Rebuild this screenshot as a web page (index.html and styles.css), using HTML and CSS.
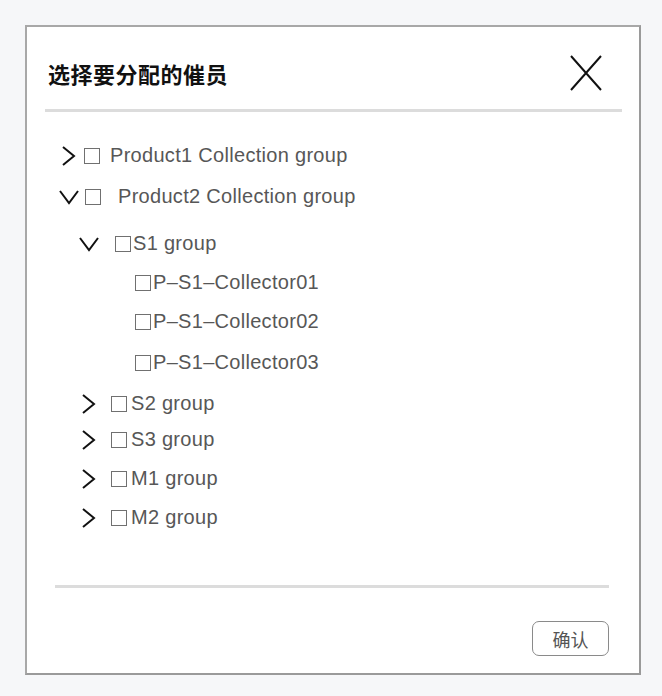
FILE: index.html
```html
<!DOCTYPE html>
<html lang="zh-CN">
<head>
<meta charset="UTF-8" />
<title>选择要分配的催员</title>
<link rel="stylesheet" href="styles.css">
</head>
<body>
  <div class="dialog">
    <div class="dialog-header">
      <h1>选择要分配的催员</h1>
      <button class="close" aria-label="close">
        <svg width="32" height="36" viewBox="0 0 32 36"><path d="M1 1 L31 35 M31 1 L1 35" stroke="#111" stroke-width="2" fill="none"/></svg>
      </button>
    </div>
    <div class="divider top"></div>

    <ul class="tree">
      <li>
        <div class="row">
          <svg class="chev" viewBox="0 0 20 20"><path d="M4 1 L15 10 L4 19"/></svg>
          <span class="box"></span><span class="label">Product1 Collection group</span>
        </div>
      </li>
      <li>
        <div class="row open root-open">
          <svg class="chev" viewBox="0 0 20 20"><path d="M1 4 L10 16 L19 4"/></svg>
          <span class="box"></span><span class="label">Product2 Collection group</span>
        </div>
        <ul class="sub">
          <li>
            <div class="row open s1">
              <svg class="chev" viewBox="0 0 20 20"><path d="M1 4 L10 16 L19 4"/></svg>
              <span class="box"></span><span class="label">S1 group</span>
            </div>
            <ul class="leaves">
              <li class="row leaf"><span class="box"></span><span class="label">P–S1–Collector01</span></li>
              <li class="row leaf"><span class="box"></span><span class="label">P–S1–Collector02</span></li>
              <li class="row leaf"><span class="box"></span><span class="label">P–S1–Collector03</span></li>
            </ul>
          </li>
          <li>
            <div class="row s2">
              <svg class="chev" viewBox="0 0 20 20"><path d="M4 1 L15 10 L4 19"/></svg>
              <span class="box"></span><span class="label">S2 group</span>
            </div>
          </li>
          <li>
            <div class="row s3">
              <svg class="chev" viewBox="0 0 20 20"><path d="M4 1 L15 10 L4 19"/></svg>
              <span class="box"></span><span class="label">S3 group</span>
            </div>
          </li>
          <li>
            <div class="row">
              <svg class="chev" viewBox="0 0 20 20"><path d="M4 1 L15 10 L4 19"/></svg>
              <span class="box"></span><span class="label">M1 group</span>
            </div>
          </li>
          <li>
            <div class="row">
              <svg class="chev" viewBox="0 0 20 20"><path d="M4 1 L15 10 L4 19"/></svg>
              <span class="box"></span><span class="label">M2 group</span>
            </div>
          </li>
        </ul>
      </li>
    </ul>

    <div class="divider bottom"></div>
    <div class="footer">
      <button class="confirm">确认</button>
    </div>
  </div>
</body>
</html>
```

FILE: styles.css
```css
/* page */
body {
  margin: 0;
  background: #f6f7f9;
  font-family: "Liberation Sans", "Noto Sans CJK SC", sans-serif;
  color: #575757;
}

/* dialog box */
.dialog {
  box-sizing: border-box;
  width: 616px;
  height: 650px;
  margin: 25px 0 0 25px;
  background: #fff;
  border: 2px solid #9a9a9a;
  border-top-color: #a8a8a8;
  border-left-color: #a8a8a8;
}

.dialog-header {
  display: flex;
  align-items: center;
  justify-content: space-between;
  height: 36px;
  margin: 28px 37px 0 21px;
}
.dialog-header h1 {
  margin: 0;
  font-family: "Noto Sans CJK SC", sans-serif;
  font-size: 22px;
  font-weight: 700;
  color: #111;
  letter-spacing: 0.5px;
}
.close {
  display: flex;
  padding: 0;
  border: none;
  background: none;
  cursor: pointer;
}

.divider {
  height: 3px;
  background: #dcdcdc;
}
.divider.top {
  margin: 18px 17px 0 18px;
}
.divider.bottom {
  margin: 48px 30px 0 28px;
}

/* tree */
.tree, .tree ul {
  list-style: none;
  margin: 0;
  padding: 0;
}
.tree {
  padding: 24px 0 0 32px;
}
.tree .sub {
  padding-left: 20px;
}
.tree .leaves {
  padding-left: 56px;
}
.row {
  display: flex;
  align-items: center;
  height: 39px;
  font-size: 20px;
  letter-spacing: 0.3px;
}
.root-open {
  margin-top: 2px;
}
.s1 {
  margin-top: 8px;
}
.leaf:last-child {
  margin-top: 2px;
}
.s2 {
  margin-top: 2px;
}
.s3 {
  margin-top: -3px;
}
.chev {
  width: 20px;
  height: 20px;
  flex: none;
}
.chev path {
  fill: none;
  stroke: #111;
  stroke-width: 2;
}
.box {
  box-sizing: border-box;
  width: 16px;
  height: 16px;
  flex: none;
  margin-left: 5px;
  border: 1px solid #707070;
}
.label {
  margin-left: 10px;
  white-space: nowrap;
}
.root-open .box { margin-left: 6px; }
.root-open .label { margin-left: 17px; }
.sub .row .box { margin-left: 12px; }
.sub .row .label { margin-left: 4px; }
.sub .s1 .box { margin-left: 16px; }
.sub .s1 .label { margin-left: 2px; }
.sub .leaf .box { margin-left: 0; }
.sub .leaf .label { margin-left: 2px; }

/* footer */
.footer {
  display: flex;
  justify-content: flex-end;
  margin: 33px 30px 0 0;
}
.confirm {
  width: 77px;
  height: 35px;
  padding: 0;
  font-family: "Noto Sans CJK SC", sans-serif;
  font-size: 18px;
  color: #555;
  background: #fff;
  border: 1.5px solid #8a8a8a;
  border-radius: 7px;
  cursor: pointer;
}
```
